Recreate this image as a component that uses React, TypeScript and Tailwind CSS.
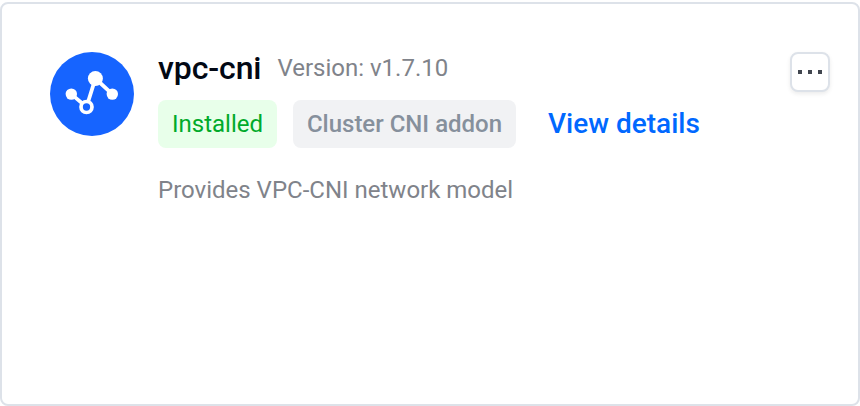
function AddonLogo() {
  return (
    <svg className="size-[84px] shrink-0" viewBox="0 0 84 84" fill="none">
      <circle cx="42" cy="42" r="42" fill="#1664ff" />
      <path d="M21.3 42.1 36.5 55 45.4 26.5 62.3 42.1" stroke="#fff" strokeWidth="3.8" />
      <circle cx="21.3" cy="42.1" r="5.7" fill="#fff" />
      <circle cx="62.3" cy="42.1" r="5.7" fill="#fff" />
      <circle cx="45.4" cy="26.5" r="7.5" fill="#fff" />
      <circle cx="36.5" cy="55" r="5.5" fill="#1664ff" stroke="#fff" strokeWidth="3.7" />
    </svg>
  );
}

export default function App() {
  return (
    <div className="h-[406px] w-[860px] bg-white pt-0.5 font-['Roboto','Liberation_Sans',sans-serif] antialiased">
      <article className="flex h-[404px] items-start rounded-lg border-2 border-[#dde2e9] pt-12 pr-7 pl-12">
        <AddonLogo />
        <div className="ml-6 flex-1">
          <div className="flex h-8 items-center gap-4">
            <h1 className="text-[32px] leading-8 font-medium tracking-[-0.1px] text-[#020814]">vpc-cni</h1>
            <span className="text-2xl leading-8 text-[#80838a]">Version: v1.7.10</span>
          </div>
          <div className="mt-4 flex h-12 items-center">
            <span className="flex h-12 w-[119px] items-center justify-center rounded-lg bg-[#e8ffea] text-2xl text-[#00aa2a]">
              Installed
            </span>
            <span className="ml-4 flex h-12 w-[223px] items-center justify-center rounded-lg bg-[#f1f2f4] text-2xl font-medium text-[#86909c]">
              Cluster CNI addon
            </span>
            <a className="ml-8 text-[28px] leading-10 font-medium text-[#0068ff]" href="#details">
              View details
            </a>
          </div>
          <p className="mt-6 text-2xl leading-9 text-[#80838a]">Provides VPC-CNI network model</p>
        </div>
        <button
          aria-label="More actions"
          className="flex size-10 items-center justify-center gap-1.5 rounded-lg border-2 border-[#dde2e9] bg-white shadow-[0_2px_4px_rgba(0,0,0,0.08)]"
        >
          <span className="size-1 bg-[#41464f]" />
          <span className="size-1 bg-[#41464f]" />
          <span className="size-1 bg-[#41464f]" />
        </button>
      </article>
    </div>
  );
}
